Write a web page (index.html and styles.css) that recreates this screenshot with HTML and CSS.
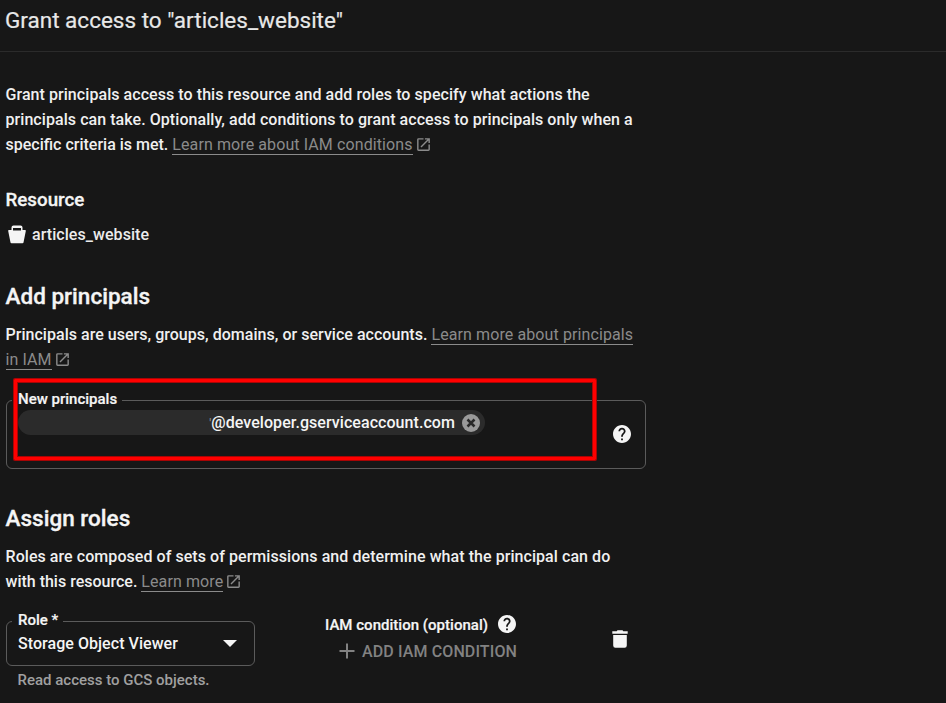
FILE: index.html
```html
<!DOCTYPE html>
<html lang="en">
<head>
<meta charset="utf-8">
<title>Grant access</title>
<link rel="stylesheet" href="styles.css">
</head>
<body>
<svg class="defs" width="0" height="0" aria-hidden="true">
  <symbol id="launch" viewBox="0 0 24 24"><path d="M19 19H5V5h7V3H5a2 2 0 0 0-2 2v14a2 2 0 0 0 2 2h14c1.100 0 2-.9 2-2v-7h-2v7zM14 3v2h3.590l-9.830 9.830 1.410 1.410L19 6.410V10h2V3h-7z"/></symbol>
  <symbol id="help" viewBox="2 2 20 20"><path d="M12 2C6.480 2 2 6.480 2 12s4.480 10 10 10 10-4.480 10-10S17.520 2 12 2zm1 17h-2v-2h2v2zm2.070-7.750l-.9.920C13.450 12.900 13 13.500 13 15h-2v-.5c0-1.100.45-2.100 1.170-2.830l1.240-1.260c.37-.36.59-.86.59-1.410 0-1.100-.9-2-2-2s-2 .9-2 2H8c0-2.210 1.790-4 4-4s4 1.790 4 4c0 .88-.36 1.680-.93 2.250z"/></symbol>
</svg>
<header class="header"><h1>Grant access to "articles_website"</h1></header>
<main class="content">
  <p class="text">Grant principals access to this resource and add roles to specify what actions the<br>principals can take. Optionally, add conditions to grant access to principals only when a<br><span class="tight">specific criteria is met. </span><a class="link">Learn more about IAM conditions</a><svg class="launch"><use href="#launch"/></svg></p>

  <h3 class="resource-title">Resource</h3>
  <div class="resource">
    <svg class="bucket" viewBox="0 0 18 19"><path fill-rule="evenodd" d="M5.500 0.500h7a2 2 0 0 1 2 2V5H17a.8.8 0 0 1 .8 1l-2.300 11.500a1 1 0 0 1-1 .8h-11a1 1 0 0 1-1-.8L.2 6A.8.8 0 0 1 1 5h2.500V2.500a2 2 0 0 1 2-2zM5 3v2.600h8V3z"/></svg>
    <span>articles_website</span>
  </div>

  <h2 class="principals-title">Add principals</h2>
  <p class="text principals-text">Principals are users, groups, domains, or service accounts. <a class="link">Learn more about principals</a><br><a class="link">in IAM</a><svg class="launch"><use href="#launch"/></svg></p>

  <div class="field principals-field">
    <span class="label">New principals</span>
    <div class="chip"><span class="chip-text"><span class="sliver">'</span>@developer.gserviceaccount.com</span>
      <svg class="remove" viewBox="0 0 18 18"><circle cx="9" cy="9" r="9"/><path d="M5.500 5.500l7 7M12.500 5.500l-7 7"/></svg>
    </div>
    <svg class="help"><use href="#help"/></svg>
    <div class="highlight"></div>
  </div>

  <h2 class="roles-title">Assign roles</h2>
  <p class="text roles-text">Roles are composed of sets of permissions and determine what the principal can do<br><span class="tight">with this resource. </span><a class="link">Learn more</a><svg class="launch"><use href="#launch"/></svg></p>

  <div class="role-row">
    <div class="role">
      <div class="field role-field">
        <span class="label">Role *</span>
        <span class="value">Storage Object Viewer</span>
        <svg class="arrow" viewBox="0 0 14 7"><path d="M0 0h14L7 7z"/></svg>
      </div>
      <div class="hint">Read access to GCS objects.</div>
    </div>
    <div class="condition">
      <div class="condition-title"><span>IAM condition (optional)</span><svg class="help"><use href="#help"/></svg></div>
      <div class="add"><svg viewBox="0 0 16 16"><path d="M7 0.500h2V7h6.500v2H9v6.500H7V9H.5V7H7z"/></svg><span>ADD IAM CONDITION</span></div>
    </div>
    <svg class="trash" viewBox="0 0 16 18"><path d="M1.200 5h13.600v10.500a2.200 2.200 0 0 1-2.200 2.200H3.400a2.200 2.200 0 0 1-2.200-2.200zM.3 1.200H4.700L5.500.3h5l.8.9h4.400v2.500H.3z"/></svg>
  </div>
</main>
</body>
</html>
```
FILE: styles.css
```css
* { box-sizing: border-box; }
body { margin: 0; background: #171717; color: #f5f5f5; font-family: Roboto, "Liberation Sans", sans-serif; height: 703px; overflow: hidden; }
h1, h2, h3, p { margin: 0; }
svg { display: block; fill: currentColor; flex: none; }
.defs { position: absolute; }
.header { height: 52px; padding: 6px 5px 0; border-bottom: 1px solid #2b2b2b; }
h1 { font-size: 22.5px; line-height: 28px; font-weight: 400; color: #e8e8e8; -webkit-text-stroke: .2px; }
.content { padding: 30px 0 0 5.5px; width: 660px; }
.text { font-size: 16px; line-height: 25px; font-weight: 500; white-space: nowrap; letter-spacing: .06px; color: #f0f0f0; }
.tight { letter-spacing: 0; }
.link { font-weight: 400; color: #8b8b8b; border-bottom: 1px solid #8b8b8b; letter-spacing: .1px; }
.launch { display: inline-block; width: 17px; height: 17px; color: #8b8b8b; vertical-align: -3px; margin-left: 2px; }
.resource-title { padding-top: 31px; font-size: 18.75px; line-height: 25px; font-weight: 500; -webkit-text-stroke: .3px; }
.resource { display: flex; align-items: center; margin-top: 9px; height: 25px; font-size: 16px; font-weight: 500; gap: 6px; padding-left: 2.5px; letter-spacing: .06px; }
.resource span { color: #ececec; }
.bucket { width: 18px; height: 19px; }
h2 { font-size: 22.5px; line-height: 30px; font-weight: 500; letter-spacing: .02px; -webkit-text-stroke: .35px; }
.principals-title { margin-top: 34px; }
.principals-text { margin-top: 11px; letter-spacing: .03px; }
.field { position: relative; border: 1px solid #5b5b5b; border-radius: 6px; }
.label { position: absolute; left: 5px; top: -11px; height: 18px; padding: 0 5px 0 6px; background: #171717; font-size: 15px; line-height: 19px; font-weight: 500; -webkit-text-stroke: .2px; }
.principals-field { margin: 28px 0 0 .5px; width: 640px; height: 69px; padding: 9px 14.500px 0 11px; display: flex; justify-content: space-between; }
.chip { width: 467px; height: 25px; border-radius: 13px; background: #2b2b2b; display: flex; align-items: center; justify-content: flex-end; padding-right: 5px; font-size: 16px; font-weight: 500; gap: 7px; letter-spacing: .06px; }
.chip-text { white-space: nowrap; }
.sliver { color: #888; font-size: 12px; }
.remove { width: 18px; height: 18px; color: #9a9a9a; }
.remove path { stroke: #292929; stroke-width: 2.500; }
.help { width: 18px; height: 18px; }
.principals-field > .help { margin-top: 15px; }
.highlight { position: absolute; left: 7px; top: -22px; width: 582px; height: 81px; border: 3px solid #f00; border-radius: 1px; box-shadow: 0 0 0 1px #a80505, inset 0 0 0 1px #a80505; }
.roles-title { margin-top: 34px; }
.roles-text { margin-top: 11px; }
.role-row { display: flex; margin-top: 20px; }
.role { width: 249.5px; padding: 7px 0 0 .5px; }
.role-field { height: 45px; display: flex; align-items: center; justify-content: space-between; padding: 0 17px 0 11px; font-size: 16px; font-weight: 500; letter-spacing: .05px; }
.role-field .label { letter-spacing: 0; }
.arrow { width: 14px; height: 7px; }
.hint { margin: 4px 0 0 11.500px; font-size: 15px; line-height: 21px; font-weight: 500; color: #a0a0a0; }
.condition { margin-left: 70px; width: 287px; }
.condition-title { display: flex; align-items: center; gap: 10px; height: 20px; font-size: 15px; font-weight: 500; letter-spacing: .02px; -webkit-text-stroke: .2px; }
.condition-title span { padding-top: 1px; }
.add { display: flex; align-items: center; gap: 7px; height: 20px; margin: 7px 0 0 14px; color: #828282; font-size: 16px; font-weight: 500; letter-spacing: .12px; }
.add svg { width: 16px; height: 16px; }
.trash { width: 16px; height: 18px; margin-top: 16px; }
```
